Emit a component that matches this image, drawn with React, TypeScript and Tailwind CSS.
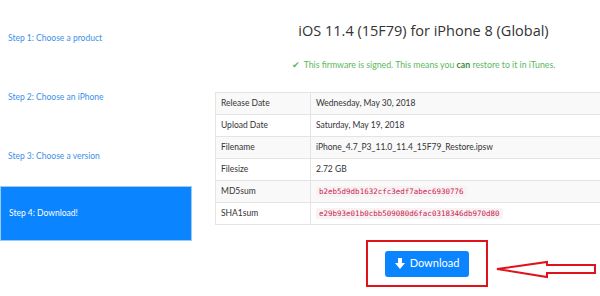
import React from "react";

const rows: { label: string; value: string; code?: boolean }[] = [
  { label: "Release Date", value: "Wednesday, May 30, 2018" },
  { label: "Upload Date", value: "Saturday, May 19, 2018" },
  { label: "Filename", value: "iPhone_4.7_P3_11.0_11.4_15F79_Restore.ipsw" },
  { label: "Filesize", value: "2.72 GB" },
  { label: "MD5sum", value: "b2eb5d9db1632cfc3edf7abec6930776", code: true },
  { label: "SHA1sum", value: "e29b93e01b0cbb509080d6fac0318346db970d80", code: true },
];

const steps = ["Step 1: Choose a product", "Step 2: Choose an iPhone", "Step 3: Choose a version"];

const App = () => {
  return (
    <div className="w-[600px] h-[296px] overflow-hidden bg-white flex font-['Lato','Open_Sans',sans-serif] relative">
      <aside className="w-[192px] shrink-0 pt-[9px]">
        {steps.map((s) => (
          <div key={s} className="h-[59px] flex items-center pl-[8px] text-[8.5px] text-[#3d8fe8]">
            {s}
          </div>
        ))}
        <div className="h-[55px] flex items-center pl-[8px] text-[8.5px] text-white bg-[#0a84ff] border border-[#9ccaf5]">
          Step 4: Download!
        </div>
      </aside>

      <main className="w-[454px] shrink-0 pl-[23px]">
        <h1 className="text-center text-[14.5px] text-[#333] mt-[21px] pr-[14px] leading-[20px] font-['Open_Sans',sans-serif]">
          iOS 11.4 (15F79) for iPhone 8 (Global)
        </h1>
        <p className="text-center text-[8.75px] text-[#5cb85c] mt-[18px] pr-[14px] leading-[12px]">
          <span className="mr-[4px]">✔</span>This firmware is signed. This means you <b className="text-[#3c8a3c]">can</b> restore to it in iTunes.
        </p>
        <table className="mt-[21px] w-[431px] border-collapse text-[8.5px] text-[#333]">
          <tbody>
            {rows.map((r, i) => (
              <tr key={r.label} className={i % 2 === 0 ? "bg-[#f9f9f9]" : "bg-white"}>
                <td className="w-[95px] h-[22px] border border-[#e4e4e4] pl-[5px]">{r.label}</td>
                <td className="h-[22px] border border-[#e4e4e4] pl-[5px]">
                  {r.code ? (
                    <span className="font-['DejaVu_Sans_Mono',monospace] text-[7.5px] text-[#c7254e] bg-[#f9f2f4] px-[3px] py-[1px] rounded-[2px]">
                      {r.value}
                    </span>
                  ) : (
                    r.value
                  )}
                </td>
              </tr>
            ))}
          </tbody>
        </table>
        <div className="ml-[151px] mt-[15px] w-[122px] h-[47px] border-2 border-[#e0121b] flex items-center justify-center">
          <button className="w-[84px] h-[26px] bg-[#0a84ff] rounded-[3px] text-white text-[11px] flex items-center justify-center gap-[5px]">
            <svg width="10" height="11" viewBox="0 0 10 11">
              <path d="M3 0h4v5h3L5 11 0 5h3z" fill="white" />
            </svg>
            Download
          </button>
        </div>
      </main>

      <svg className="absolute left-[495px] top-[259px]" width="103" height="22" viewBox="0 0 103 22">
        <path
          d="M2 10 L52 3 L52 6 L100 6 L100 14 L52 14 L52 18 Z"
          fill="none"
          stroke="#e0121b"
          strokeWidth="2"
          strokeLinejoin="miter"
        />
      </svg>
    </div>
  );
};

export default App;
